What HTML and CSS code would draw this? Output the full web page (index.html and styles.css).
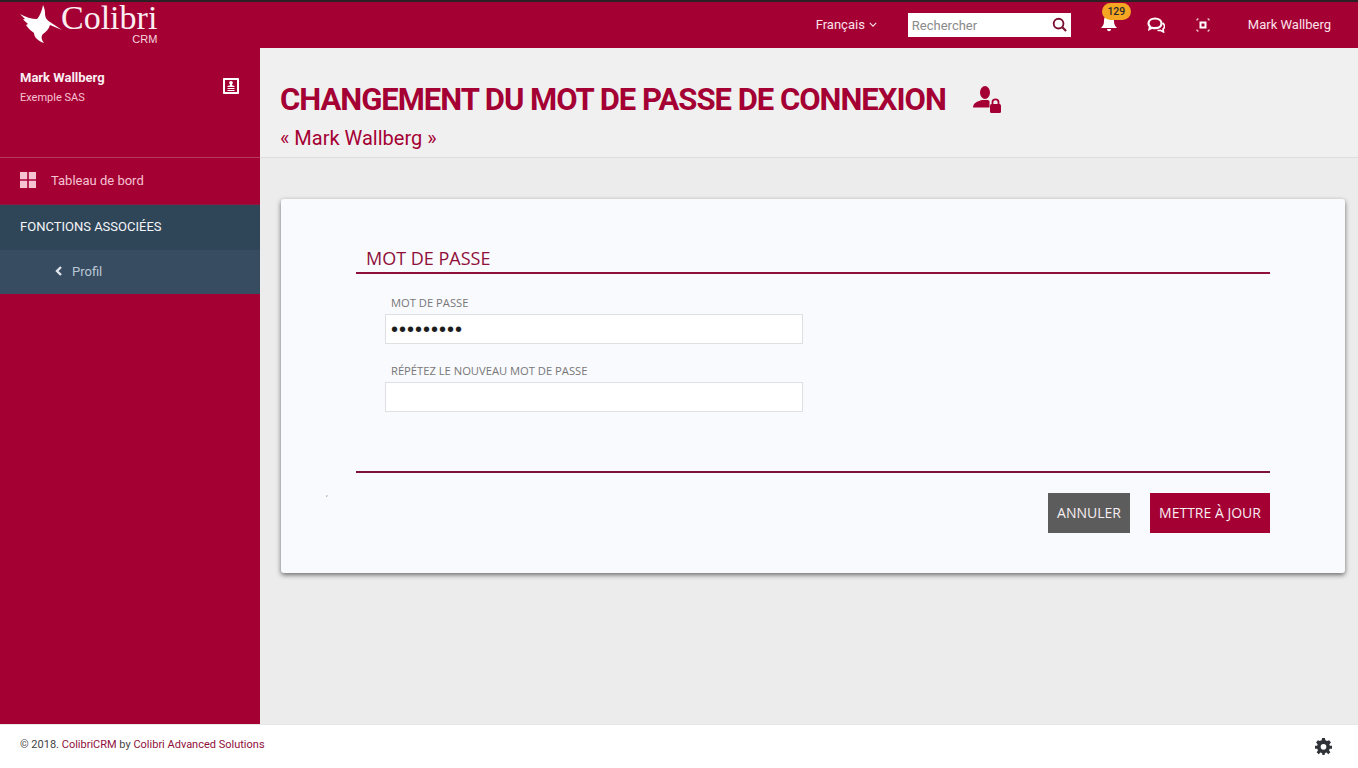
FILE: index.html

```html
<!DOCTYPE html>
<html lang="fr">
<head>
    <meta charset="UTF-8">
    <meta name="viewport" content="width=device-width, initial-scale=1.0">
    <title>Colibri CRM</title>
    <link rel="stylesheet" href="styles.css">
</head>
<body>

<!-- Top bar -->
<header class="topbar">
    <a class="logo" href="#">
        <svg class="logo-bird" viewBox="0 0 44 40" width="44" height="40"><path d="M23 1C22 6 20 12 17 15C12 15 5 13 0 10L5 15L3 15.500L8 20L6 21C8 24 11 27 14 29C14 33 18 37 24 39C21 35 21 32 23 30C26 28 29 25 30 21L42 26L30 18C27 16 25 14 25 9C25 6 24 3 23 1Z"/></svg>
        <span class="logo-text">
            <span class="logo-name">Colibri</span>
            <span class="logo-sub">CRM</span>
        </span>
    </a>
    <nav class="topnav">
        <a class="lang" href="#">Français
            <svg viewBox="0 0 10 6" width="8" height="5"><path d="M1 1l4 4 4-4" fill="none" stroke="currentColor" stroke-width="1.4"/></svg>
        </a>
        <div class="search">
            <input class="search-input" type="text" placeholder="Rechercher">
            <svg viewBox="0 0 16 16" width="15" height="15"><circle cx="7" cy="7" r="5.2" fill="none" stroke="#7a1030" stroke-width="2"/><path d="M11 11l4 4" stroke="#7a1030" stroke-width="2.2"/></svg>
        </div>
        <a class="bell" href="#">
            <svg viewBox="0 0 16 18" width="16" height="18"><path d="M8 1C11.500 1 13 4 13 7C13 10.500 14 12 16 14H0C2 12 3 10.500 3 7C3 4 4.500 1 8 1ZM6 15H10C10 16.500 9 17.200 8 17.200C7 17.200 6 16.500 6 15Z" fill="#fff"/></svg>
            <span class="badge">129</span>
        </a>
        <a class="chat" href="#">
            <svg viewBox="0 0 18 16" width="18" height="16"><path d="M8 1.500C11.500 1.500 14.500 3.500 14.500 6.500C14.500 9.500 11.500 11.200 8 11.200C7 11.200 6 11 5 10.700L2.500 12L3 9.500C2 8.500 1.500 7.600 1.500 6.500C1.500 3.500 4.500 1.500 8 1.500Z" fill="none" stroke="#fff" stroke-width="2.200"/><path d="M15.500 6C17 7 17.500 8.200 17.500 9.300C17.500 10.500 17 11.400 16 12.200L16.500 15L13.500 13.300C12.500 13.500 11.500 13.500 10.500 13.200" fill="none" stroke="#fff" stroke-width="1.600"/></svg>
        </a>
        <a class="focus" href="#">
            <svg viewBox="0 0 14 14" width="14" height="14"><path d="M1 2.500V1H2.500M11.500 1H13V2.500M13 11.500V13H11.500M2.500 13H1V11.500" fill="none" stroke="#fff" stroke-width="1"/><path d="M3.500 3.500H10.500V10.500H3.500ZM5.500 5.500V8.500H8.500V5.500Z" fill="#fff" fill-rule="evenodd"/></svg>
        </a>
        <a class="user-link" href="#">Mark Wallberg</a>
    </nav>
</header>

<div class="layout">
    <!-- Sidebar -->
    <aside class="sidebar">
        <div class="profile">
            <div>
                <div class="profile-name">Mark Wallberg</div>
                <div class="profile-company">Exemple SAS</div>
            </div>
            <svg class="profile-icon" viewBox="0 0 16 16" width="16" height="16"><path d="M1 0H15C15.600 0 16 .4 16 1V15C16 15.600 15.600 16 15 16H1C.4 16 0 15.600 0 15V1C0 .4 .4 0 1 0ZM2 2V14H14V2ZM8 3C9.100 3 9.800 3.800 9.800 4.800C9.800 5.600 9.400 6.200 9 6.500V7.200L11.500 8V9H4.500V8L7 7.200V6.500C6.600 6.200 6.200 5.600 6.200 4.800C6.200 3.800 6.900 3 8 3ZM4.500 10H11.500V11H4.500ZM4.500 12H11.500V13H4.500Z" fill="#fff" fill-rule="evenodd"/></svg>
        </div>
        <a class="menu-item" href="#">
            <svg viewBox="0 0 16 16" width="16" height="16"><path d="M0 0H7.200V7.200H0ZM8.800 0H16V7.200H8.800ZM0 8.800H7.200V16H0ZM8.800 8.800H16V16H8.800Z" fill="#f6c3d2"/></svg>
            Tableau de bord
        </a>
        <div class="menu-section">FONCTIONS ASSOCIÉES</div>
        <a class="menu-sub" href="#">
            <svg viewBox="0 0 7 10" width="7" height="10"><path d="M6 1L2 5L6 9" fill="none" stroke="#dfe6ee" stroke-width="2.400"/></svg>
            Profil
        </a>
    </aside>

    <!-- Main content -->
    <main class="main">
        <div class="page-head">
            <div class="title-row">
                <h1 class="page-title">CHANGEMENT DU MOT DE PASSE DE CONNEXION</h1>
                <svg viewBox="0 0 28 28" width="28" height="28"><ellipse cx="12" cy="6.500" rx="5" ry="6.500" fill="#a50034"/><path d="M0 21.500C0 17 4 15.500 9 14H15L16.500 15V21.500Z" fill="#a50034"/><path d="M19.500 18.500V16C19.500 14.400 20.800 13.300 22.500 13.300C24.200 13.300 25.500 14.400 25.500 16V18.500" fill="none" stroke="#a50034" stroke-width="1.800"/><rect x="17" y="18" width="11" height="9" rx="1.500" fill="#a50034"/></svg>
            </div>
            <div class="page-sub">« Mark Wallberg »</div>
        </div>

        <div class="card">
            <h2 class="section-title">MOT DE PASSE</h2>
            <div class="fields">
                <label class="field-label">MOT DE PASSE</label>
                <input class="field-input field-filled" type="password" value="password1">
                <label class="field-label">RÉPÉTEZ LE NOUVEAU MOT DE PASSE</label>
                <input class="field-input" type="password">
            </div>
            <div class="card-foot">
                <span class="stray">,</span>
                <button class="btn btn-grey">ANNULER</button>
                <button class="btn btn-red">METTRE À JOUR</button>
            </div>
        </div>
    </main>
</div>

<footer class="footer">
    <div class="footer-text">© 2018. <a href="#">ColibriCRM</a> by <a href="#">Colibri Advanced Solutions</a></div>
    <svg viewBox="0 0 24 24" width="17" height="17"><path d="M10 0H14L14.600 3.200C15.500 3.500 16.300 3.900 17 4.400L20 3.200L22.500 6.500L20.300 8.800C20.600 9.600 20.800 10.300 20.900 11H24V15L20.800 15.200C20.600 16 20.200 16.800 19.800 17.500L21.700 20.200L18.700 22.800L16.300 20.600C15.600 21 14.800 21.200 14 21.400L13.500 24H10.500L10 21.400C9.200 21.200 8.400 21 7.700 20.600L5.300 22.800L2.300 20.200L4.200 17.500C3.800 16.800 3.400 16 3.200 15.200L0 15V11H3.100C3.200 10.300 3.400 9.600 3.700 8.800L1.500 6.500L4 3.200L7 4.400C7.700 3.900 8.500 3.500 9.400 3.200ZM12 8.500A4 4 0 1 0 12 16.500A4 4 0 1 0 12 8.500Z" fill="#2f3338" fill-rule="evenodd"/></svg>
</footer>

</body>
</html>
```

FILE: styles.css

```css
* {
    box-sizing: border-box;
}
html, body {
    height: 100%;
}
body {
    margin: 0;
    display: flex;
    flex-direction: column;
    overflow: hidden;
    font-family: Roboto, Arial, sans-serif;
    background-color: #ececec;
}
a {
    text-decoration: none;
    color: inherit;
}

/* Top bar */
.topbar {
    height: 48px;
    flex-shrink: 0;
    display: flex;
    align-items: center;
    justify-content: space-between;
    padding: 0 27px 1px 20px;
    background-color: #a50034;
    border-top: 2px solid #2b2024;
    color: #fff;
}
.logo {
    display: flex;
    align-items: flex-start;
    gap: 0;
    height: 45px;
    padding-top: 2px;
}
.logo-bird {
    fill: #fff;
    margin-right: -3px;
}
.logo-text {
    display: flex;
    flex-direction: column;
    align-items: flex-end;
    margin-top: -1px;
}
.logo-name {
    font-family: "Liberation Serif", serif;
    font-size: 34px;
    line-height: 30px;
    color: #fbeef2;
}
.logo-sub {
    font-family: "Liberation Sans", Arial, sans-serif;
    font-size: 11px;
    line-height: 12px;
    color: #f5d5de;
}
.topnav {
    display: flex;
    align-items: center;
    font-size: 13px;
}
.lang {
    display: flex;
    align-items: center;
    gap: 4px;
    margin-right: 31px;
    color: #fbe3ea;
}
.search {
    width: 163px;
    height: 24px;
    display: flex;
    align-items: center;
    padding-right: 4px;
    margin-right: 30px;
    background-color: #fff;
}
.search-input {
    flex: 1;
    min-width: 0;
    height: 100%;
    padding: 2px 4px 0;
    border: none;
    outline: none;
    font-family: Roboto, Arial, sans-serif;
    font-size: 13px;
}
.search-input::placeholder {
    color: #8a8a8a;
}
.bell {
    position: relative;
    display: flex;
    margin-right: 30px;
    margin-bottom: 3px;
}
.badge {
    position: absolute;
    top: -11px;
    left: 1px;
    width: 29px;
    height: 17px;
    border-radius: 9px;
    background-color: #f5a623;
    color: #2a2a2a;
    font-size: 10.500px;
    font-weight: 500;
    line-height: 17px;
    text-align: center;
}
.chat {
    display: flex;
    margin-right: 31px;
}
.focus {
    display: flex;
    margin-right: 38px;
}
.user-link {
    color: #fbe3ea;
}

/* Layout */
.layout {
    flex: 1;
    min-height: 0;
    display: flex;
}
.sidebar {
    width: 260px;
    flex-shrink: 0;
    background-color: #a50034;
    color: #fff;
}
.profile {
    height: 110px;
    display: flex;
    justify-content: space-between;
    align-items: flex-start;
    padding: 22px 21px 0 20px;
    border-bottom: 1px solid #b8385e;
}
.profile-name {
    font-size: 13px;
    font-weight: 700;
    line-height: 15px;
    color: #fbeef2;
}
.profile-company {
    margin-top: 5px;
    font-size: 11px;
    line-height: 15px;
    color: #f6c3d2;
}
.profile-icon {
    margin-top: 8px;
}
.menu-item {
    height: 46px;
    display: flex;
    align-items: center;
    gap: 15px;
    padding: 0 0 2px 20px;
    font-size: 13px;
    color: #f6c3d2;
}
.menu-section {
    height: 46px;
    display: flex;
    align-items: center;
    padding: 0 0 2px 20px;
    background-color: #2f4558;
    border-top: 1px solid #8a1a3f;
    font-size: 13px;
    color: #f4f6f8;
}
.menu-sub {
    height: 44px;
    display: flex;
    align-items: center;
    gap: 10px;
    padding: 0 0 2px 55px;
    background-color: #374c61;
    font-size: 13px;
    color: #b9c7d6;
}

/* Main content */
.main {
    flex: 1;
    min-width: 0;
}
.page-head {
    height: 110px;
    padding: 29px 20px 0 20px;
    background-color: #f0f0f0;
    border-bottom: 1px solid #dddddd;
}
.title-row {
    display: flex;
    align-items: center;
    gap: 27px;
}
.page-title {
    margin: 0;
    font-size: 31px;
    font-weight: 700;
    line-height: 46px;
    letter-spacing: -1px;
    color: #a50034;
}
.page-sub {
    margin-top: 3px;
    font-size: 20px;
    line-height: 24px;
    color: #a50034;
}
.card {
    height: 374px;
    margin: 41px 13px 0 21px;
    padding: 47px 75px 0 75px;
    background-color: #f9fafd;
    border-radius: 3px;
    box-shadow: 0 2px 5px rgba(0, 0, 0, .55);
    font-family: "Open Sans", Arial, sans-serif;
}
.section-title {
    margin: 0;
    padding: 0 0 1px 10px;
    font-size: 18px;
    font-weight: 400;
    line-height: 25px;
    color: #8f0f3b;
    border-bottom: 2px solid #8f0f3b;
}
.fields {
    width: 418px;
    margin-left: 29px;
    padding-top: 22px;
}
.field-label {
    display: block;
    padding-left: 6px;
    font-size: 11.200px;
    line-height: 14px;
    color: #777;
}
.field-input {
    display: block;
    width: 100%;
    height: 30px;
    margin: 4px 0 20px;
    padding: 0 5px;
    border: 1px solid #dddfe2;
    outline: none;
    background-color: #fff;
    font-size: 14px;
    color: #1d1d1d;
}
.field-filled {
    font-size: 20px;
    letter-spacing: 1px;
}
.card-foot {
    position: relative;
    display: flex;
    justify-content: flex-end;
    gap: 20px;
    margin-top: 59px;
    padding-top: 20px;
    border-top: 2px solid #7d1238;
}
.stray {
    position: absolute;
    top: 16px;
    left: -30px;
    font-size: 7px;
    color: #555;
}
.btn {
    height: 40px;
    padding: 0 9px 2px;
    border: none;
    font-family: "Open Sans", Arial, sans-serif;
    font-size: 14px;
    color: #f7eef1;
}
.btn-grey {
    width: 82px;
    background-color: #5c5c5c;
}
.btn-red {
    width: 120px;
    background-color: #a50034;
}

/* Footer */
.footer {
    height: 44px;
    flex-shrink: 0;
    display: flex;
    align-items: center;
    justify-content: space-between;
    padding: 0 26px 0 20px;
    background-color: #fff;
    border-top: 1px solid #e6e6e6;
    font-size: 11px;
    color: #444;
}
.footer-text {
    margin-bottom: 4px;
}
.footer a {
    color: #8f0f3b;
}
```
